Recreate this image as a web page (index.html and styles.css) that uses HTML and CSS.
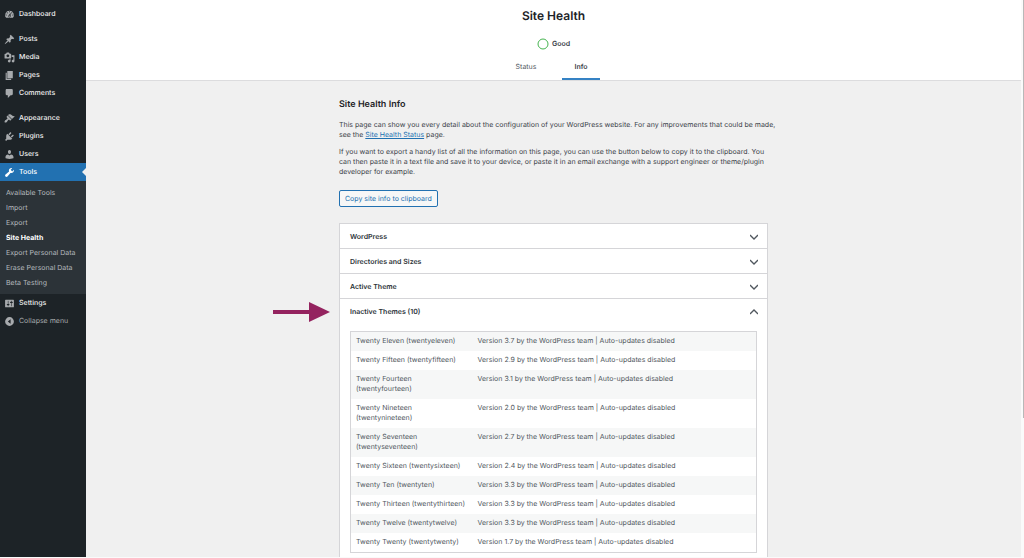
FILE: index.html
```html
<!DOCTYPE html>
<html lang="en">
<head>
  <meta charset="UTF-8" />
  <meta name="viewport" content="width=device-width, initial-scale=1.0"/>
  <title>Site Health</title>
  <link rel="stylesheet" href="styles.css">
</head>
<body>
  <nav class="sidebar">
    <ul class="menu">
      <li><a href="#"><svg viewBox="0 0 20 20"><path fill-rule="evenodd" d="M3.76 16h12.48A7.998 7.998 0 0 0 10 3a7.998 7.998 0 0 0-6.24 13zM10 4c.55 0 1 .45 1 1s-.45 1-1 1-1-.45-1-1 .45-1 1-1zM6 6c.55 0 1 .45 1 1s-.45 1-1 1-1-.45-1-1 .45-1 1-1zm8 0c.55 0 1 .45 1 1s-.45 1-1 1-1-.45-1-1 .45-1 1-1zm-5.37 5.55L12 7v6c0 1.1-.9 2-2 2s-2-.9-2-2c0-.57.24-1.08.63-1.45zM4 10c.55 0 1 .45 1 1s-.45 1-1 1-1-.45-1-1 .45-1 1-1zm12 0c.55 0 1 .45 1 1s-.45 1-1 1-1-.45-1-1 .45-1 1-1zm-5 3c0-.55-.45-1-1-1s-1 .45-1 1 .45 1 1 1 1-.45 1-1z"/></svg>Dashboard</a></li>
      <li class="group"><a href="#"><svg viewBox="0 0 20 20"><path d="M10.44 3.02l1.82-1.82 6.36 6.35-1.83 1.82c-1.05-.68-2.48-.57-3.41.36l-.75.75c-.92.93-1.04 2.35-.35 3.41l-1.83 1.82-2.41-2.41-2.8 2.79c-.42.42-3.38 2.71-3.8 2.29s1.86-3.39 2.28-3.81l2.79-2.79L4.1 9.36l1.83-1.82c1.05.69 2.48.57 3.4-.36l.75-.75c.93-.92 1.05-2.35.36-3.41z"/></svg>Posts</a></li>
      <li><a href="#"><svg viewBox="0 0 20 20"><path fill-rule="evenodd" d="M13 11V4c0-.55-.45-1-1-1h-1.67L9 1H5L3.67 3H2c-.55 0-1 .45-1 1v7c0 .55.45 1 1 1h10c.55 0 1-.45 1-1zM7 4.5c1.38 0 2.5 1.12 2.5 2.5S8.38 9.5 7 9.5 4.5 8.38 4.5 7 5.62 4.5 7 4.5zM14 6h5v10.5c0 1.38-1.12 2.5-2.5 2.5S14 17.88 14 16.5s1.12-2.5 2.5-2.5c.17 0 .34.02.5.05V9h-3V6zm-4 8.05V13h2v3.5c0 1.38-1.12 2.5-2.5 2.5S7 17.88 7 16.5 8.12 14 9.5 14c.17 0 .34.02.5.05z"/></svg>Media</a></li>
      <li><a href="#"><svg viewBox="0 0 20 20"><path d="M6 15V2h10v13H6zm-1 1h8v2H3V5h2v11z"/></svg>Pages</a></li>
      <li><a href="#"><svg viewBox="0 0 20 20"><path d="M5 2h9c1.1 0 2 .9 2 2v7c0 1.1-.9 2-2 2h-2l-5 5v-5H5c-1.1 0-2-.9-2-2V4c0-1.1.9-2 2-2z"/></svg>Comments</a></li>
      <li class="group"><a href="#"><svg viewBox="0 0 20 20"><path d="M14.48 11.06L7.41 3.99l1.5-1.5c.5-.56 2.3-.47 3.51.32 1.21.8 1.43 1.28 2.91 2.1 1.18.64 2.45 1.26 4.45.85zm-.71.71L6.7 4.7 4.93 6.47c-.39.39-.39 1.02 0 1.41l1.06 1.06c.39.39.39 1.03 0 1.42-.6.6-1.43 1.11-2.21 1.69-.35.26-.7.53-1.01.84C1.43 14.23.4 16.08 1.4 17.07c.99 1 2.84-.03 4.18-1.36.31-.31.58-.66.85-1.02.57-.78 1.08-1.61 1.69-2.21.39-.39 1.02-.39 1.41 0l1.06 1.06c.39.39 1.02.39 1.41 0z"/></svg>Appearance</a></li>
      <li><a href="#"><svg viewBox="0 0 20 20"><path d="M13.11 4.36L9.87 7.6 8 5.73l3.24-3.24c.35-.34 1.05-.2 1.56.32.52.51.66 1.21.31 1.55zm-8 1.77l.91-1.12 9.01 9.01-1.19.84c-.71.71-2.63 1.16-3.82 1.16H6.14L4.9 17.26c-.59.59-1.54.59-2.12 0-.59-.58-.59-1.53 0-2.12l1.24-1.24v-3.88c0-1.13.4-3.19 1.09-3.89zm7.26 3.97l3.24-3.24c.34-.35 1.04-.21 1.55.31.52.51.66 1.21.31 1.55l-3.24 3.25z"/></svg>Plugins</a></li>
      <li><a href="#"><svg viewBox="0 0 20 20"><path d="M10 9.25c-2.27 0-2.73-3.44-2.73-3.44C7 4.02 7.82 2 9.97 2c2.16 0 2.98 2.02 2.71 3.81 0 0-.41 3.44-2.68 3.44zm0 2.57L12.72 10c2.39 0 4.52 2.33 4.52 4.53v2.49s-3.65 1.13-7.24 1.13c-3.65 0-7.24-1.13-7.24-1.13v-2.49c0-2.25 1.94-4.48 4.47-4.48z"/></svg>Users</a></li>
      <li>
        <a class="current" href="#"><svg viewBox="0 0 20 20"><path d="M16.68 9.77c-1.34 1.34-3.3 1.67-4.95.99l-5.41 6.52c-.99.99-2.59.99-3.58 0s-.99-2.59 0-3.57l6.52-5.42c-.68-1.65-.35-3.61.99-4.95 1.28-1.28 3.12-1.62 4.72-1.06l-2.89 2.89 2.82 2.82 2.86-2.87c.53 1.58.18 3.39-1.08 4.65z"/></svg>Tools</a>
        <ul class="submenu">
          <li><a href="#">Available Tools</a></li>
          <li><a href="#">Import</a></li>
          <li><a href="#">Export</a></li>
          <li><a class="active" href="#">Site Health</a></li>
          <li><a href="#">Export Personal Data</a></li>
          <li><a href="#">Erase Personal Data</a></li>
          <li><a href="#">Beta Testing</a></li>
        </ul>
      </li>
      <li><a href="#"><svg viewBox="0 0 20 20"><path fill-rule="evenodd" d="M18 16V4c0-.55-.45-1-1-1H3c-.55 0-1 .45-1 1v12c0 .55.45 1 1 1h14c.55 0 1-.45 1-1zM8 11h1c.55 0 1 .45 1 1s-.45 1-1 1H8v1.5c0 .28-.22.5-.5.5s-.5-.22-.5-.5V13H6c-.55 0-1-.45-1-1s.45-1 1-1h1V5.5c0-.28.22-.5.5-.5s.5.22.5.5V11zm5-2h-1c-.55 0-1-.45-1-1s.45-1 1-1h1V5.5c0-.28.22-.5.5-.5s.5.22.5.5V7h1c.55 0 1 .45 1 1s-.45 1-1 1h-1v5.5c0 .28-.22.5-.5.5s-.5-.22-.5-.5V9z"/></svg>Settings</a></li>
      <li><button class="collapse" type="button"><svg viewBox="0 0 20 20"><path fill-rule="evenodd" d="M10 2a8 8 0 1 0 0 16 8 8 0 0 0 0-16zm2 12l-5-4 5-4z"/></svg>Collapse menu</button></li>
    </ul>
  </nav>

  <main>
    <header>
      <h1>Site Health</h1>
      <div class="progress">
        <svg viewBox="0 0 12 12"><circle cx="6" cy="6" r="5"/></svg>
        <span>Good</span>
      </div>
      <nav class="tabs">
        <a href="#">Status</a>
        <a class="active" href="#">Info</a>
      </nav>
    </header>

    <div class="container">
      <h2>Site Health Info</h2>
      <p>This page can show you every detail about the configuration of your WordPress website. For any improvements that could be made, see the <a href="#">Site Health Status</a> page.</p>
      <p>If you want to export a handy list of all the information on this page, you can use the button below to copy it to the clipboard. You can then paste it in a text file and save it to your device, or paste it in an email exchange with a support engineer or theme/plugin developer for example.</p>
      <button class="copy" type="button">Copy site info to clipboard</button>

      <div class="accordion">
        <h3><button type="button">WordPress <svg viewBox="0 0 8 8"><path d="M0 2l4 4 4-4"/></svg></button></h3>
        <h3><button type="button">Directories and Sizes <svg viewBox="0 0 8 8"><path d="M0 2l4 4 4-4"/></svg></button></h3>
        <h3><button type="button">Active Theme <svg viewBox="0 0 8 8"><path d="M0 2l4 4 4-4"/></svg></button></h3>
        <h3>
          <svg class="arrow" viewBox="0 0 57 20"><path d="M0 8h36V0l21 10-21 10v-8H0z"/></svg>
          <button type="button">Inactive Themes (10) <svg viewBox="0 0 8 8"><path d="M0 6l4-4 4 4"/></svg></button>
        </h3>
        <div class="panel">
          <table>
            <tbody>
              <tr><td>Twenty Eleven (twentyeleven)</td><td>Version 3.7 by the WordPress team | Auto-updates disabled</td></tr>
              <tr><td>Twenty Fifteen (twentyfifteen)</td><td>Version 2.9 by the WordPress team | Auto-updates disabled</td></tr>
              <tr><td>Twenty Fourteen (twentyfourteen)</td><td>Version 3.1 by the WordPress team | Auto-updates disabled</td></tr>
              <tr><td>Twenty Nineteen (twentynineteen)</td><td>Version 2.0 by the WordPress team | Auto-updates disabled</td></tr>
              <tr><td>Twenty Seventeen (twentyseventeen)</td><td>Version 2.7 by the WordPress team | Auto-updates disabled</td></tr>
              <tr><td>Twenty Sixteen (twentysixteen)</td><td>Version 2.4 by the WordPress team | Auto-updates disabled</td></tr>
              <tr><td>Twenty Ten (twentyten)</td><td>Version 3.3 by the WordPress team | Auto-updates disabled</td></tr>
              <tr><td>Twenty Thirteen (twentythirteen)</td><td>Version 3.3 by the WordPress team | Auto-updates disabled</td></tr>
              <tr><td>Twenty Twelve (twentytwelve)</td><td>Version 3.3 by the WordPress team | Auto-updates disabled</td></tr>
              <tr><td>Twenty Twenty (twentytwenty)</td><td>Version 1.7 by the WordPress team | Auto-updates disabled</td></tr>
            </tbody>
          </table>
        </div>
      </div>
    </div>
  </main>
  <div class="scrollbar"><div class="thumb"></div></div>
</body>
</html>
```
FILE: styles.css
```css
* { box-sizing: border-box; }
body { margin: 0; height: 100vh; overflow: hidden; display: flex; background: #f0f0f0; border-bottom: 1px solid #fafafa; color: #3c434a; font: 7px/10px Inter, "Liberation Sans", sans-serif; text-rendering: geometricPrecision; }
ul { list-style: none; margin: 0; padding: 0; }
button { font: inherit; text-rendering: inherit; cursor: pointer; }

/* admin menu */
.sidebar { flex: none; width: 86px; background: #1d2327; padding-top: 5px; }
.menu a, .collapse { display: flex; align-items: center; gap: 4px; width: 100%; height: 18px; padding: 0 4px; color: #f0f0f1; font-weight: 500; text-decoration: none; }
.menu svg { width: 11px; height: 11px; fill: #a7aaad; }
.menu .group { margin-top: 7px; }
.menu .current { position: relative; background: #2271b1; color: #fff; }
.menu .current svg { fill: #fff; }
.menu .current::after { content: ""; position: absolute; right: 0; top: 5px; border: 4px solid transparent; border-right-color: #f0f0f0; border-left: 0; }
.menu .submenu { background: #2c3338; padding: 4px 0; }
.menu .submenu a { height: 15px; padding: 0 6px; color: #b4b9be; font-weight: 400; white-space: nowrap; }
.menu .submenu .active { color: #fff; font-weight: 700; }
.collapse { border: 0; background: none; color: #a7aaad; font-weight: 400; }

/* page header */
main { flex: 1; min-width: 0; }
header { display: flex; flex-direction: column; align-items: center; height: 81px; padding-top: 8px; background: #fff; border-bottom: 1px solid #dcdcde; }
h1 { margin: 0; font-size: 12px; line-height: 16px; font-weight: 600; color: #1d2327; }
.progress { display: flex; align-items: center; gap: 3px; margin-top: 14px; font-weight: 600; }
.progress svg { width: 12px; height: 12px; fill: none; stroke: #46b450; stroke-width: 1; }
.tabs { display: grid; grid-template-columns: 38px 38px; gap: 17px; margin-top: auto; }
.tabs a { height: 18px; text-align: center; color: #50575e; text-decoration: none; border-bottom: 2px solid transparent; }
.tabs .active { font-weight: 600; color: #3c434a; border-bottom-color: #3582c4; }

/* content */
.container { max-width: 429px; margin: 0 auto; padding-top: 18px; }
h2 { margin: 0 0 9px; font-size: 9px; line-height: 12px; font-weight: 600; color: #1d2327; }
p { margin: 0 -9px 7px 0; }
p a { color: #2271b1; }
.copy { display: block; height: 17px; margin: 13px 0 16px; padding: 0 5px; border: 1px solid #2271b1; border-radius: 2px; background: #f6f7f7; color: #2271b1; line-height: 15px; }

.accordion { background: #fff; border: 1px solid #d5d5d8; }
.accordion h3 { position: relative; margin: 0; font-size: 7px; }
.accordion h3 + h3 { border-top: 1px solid #d5d5d8; }
.accordion button { display: flex; justify-content: space-between; align-items: center; width: 100%; height: 24px; padding: 2px 9px 0 10px; border: 0; background: none; color: #2c3338; font-weight: 600; }
.accordion button svg { width: 8px; height: 8px; fill: none; stroke: #50575e; stroke-width: 1.3; }
.arrow { position: absolute; right: 100%; top: 3px; width: 57px; height: 20px; margin-right: 10px; fill: #94235f; }
.panel { padding: 8px 10px 11px; }
table { width: 100%; border: 1px solid #d5d5d8; border-spacing: 0; table-layout: fixed; color: #50575e; }
td { padding: 4px 5px 5px; vertical-align: top; }
td:first-child { width: 30%; }
tr:nth-child(odd) { background: #f6f7f7; }

.scrollbar { flex: none; width: 3px; background: #fafafa; }
.thumb { width: 1px; height: 75%; margin-left: auto; background: #b8b8b8; }
```
